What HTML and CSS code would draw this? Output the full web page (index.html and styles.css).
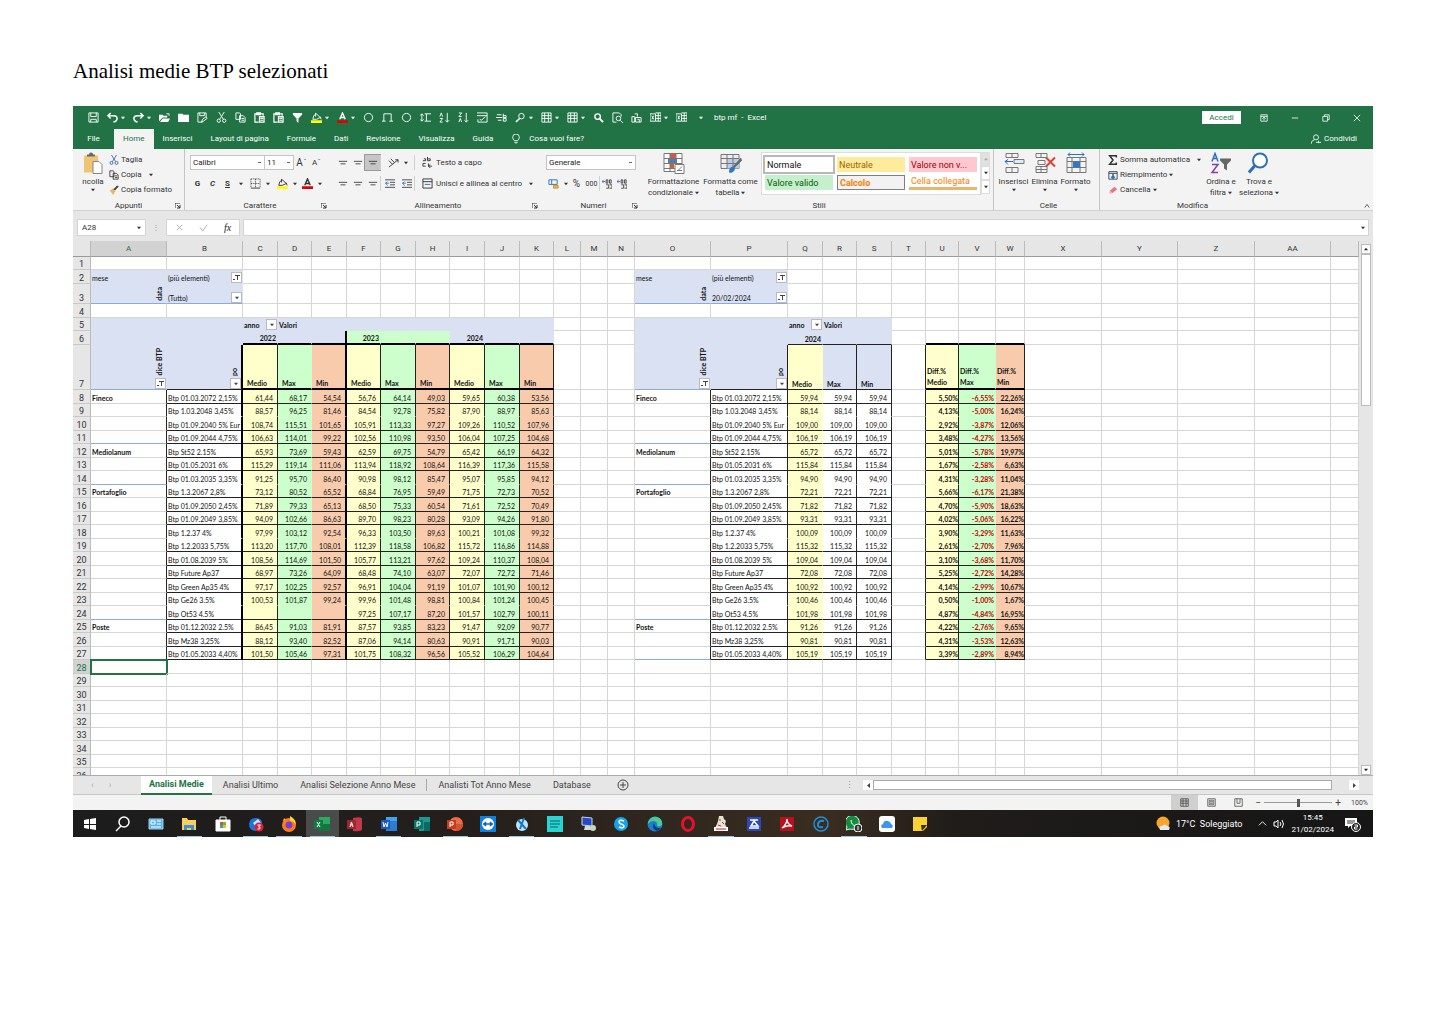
FILE: index.html
```html
<!DOCTYPE html>
<html lang="it">
<head>
<meta charset="utf-8">
<title>Analisi medie BTP selezionati</title>
<link rel="stylesheet" href="styles.css">
</head>
<body>
<svg class="defs" aria-hidden="true">
  <symbol id="save" viewBox="0 0 12 12"><path d="M1 1h10v10H1zM3 1v4h6V1M3 11V8h6v3"/></symbol>
  <symbol id="undo" viewBox="0 0 12 12"><path d="M4 1L1 4l3 3M1 4h6q4 0 4 3t-4 4" stroke-width="1.6"/></symbol>
  <symbol id="redo" viewBox="0 0 12 12"><path d="M8 1l3 3-3 3M11 4H5Q1 4 1 7t4 4" stroke-width="1.6"/></symbol>
  <symbol id="open" viewBox="0 0 12 12"><path class="f" d="M0 10V3h4l1 1h4v2H4zM1 11l3-4h8l-2 4z"/><path d="M8 2h3v2"/></symbol>
  <symbol id="folder" viewBox="0 0 12 12"><path class="f" d="M0 2h5l1 1h6v8H0z"/></symbol>
  <symbol id="savepen" viewBox="0 0 12 12"><path d="M6 11H1V1h9v4M3 1v3h5V1M5 11l1-3 4-3 1 2-4 3z"/></symbol>
  <symbol id="cut" viewBox="0 0 12 12"><path d="M3 0l5 8M9 0L4 8"/><circle cx="3" cy="9.500" r="1.800"/><circle cx="9" cy="9.500" r="1.800"/></symbol>
  <symbol id="copy" viewBox="0 0 12 12"><path d="M1 1h4l1 1v6H1zM5 4h4l2 2v5H5zM7 7h3M7 9h3"/></symbol>
  <symbol id="paste" viewBox="0 0 12 12"><path d="M5 11H1V2h9v2M3 1h4v2H3zM6 5h5v6H6zM7 7h3M7 9h3" stroke-width="1.300"/></symbol>
  <symbol id="funnel" viewBox="0 0 12 12"><path class="f" d="M1 1h10v2L7 7v5L5 10V7L1 3z"/></symbol>
  <symbol id="fill" viewBox="0 0 12 12"><path d="M5 1v4M3 4l3-2 4 4-4 2H2zM10 5l1 3"/><path d="M0 9h12v3H0z" style="fill:#ff0;stroke:none"/></symbol>
  <symbol id="fcol" viewBox="0 0 12 12"><path d="M3 8l3-7 3 7M4 6h4" stroke-width="1.500"/><path d="M0 9h12v3H0z" style="fill:#e00000;stroke:none"/></symbol>
  <symbol id="circle" viewBox="0 0 12 12"><circle cx="6" cy="6" r="4.500"/></symbol>
  <symbol id="rect" viewBox="0 0 12 12"><path d="M2 10V2h8v8M0 10h4M8 10h4"/></symbol>
  <symbol id="span" viewBox="0 0 12 12"><path d="M2 2v8M0 4l2-2 2 2M0 8l2 2 2-2M5 2h7M5 10h7M7 2v8"/></symbol>
  <symbol id="az" viewBox="0 0 12 12"><path d="M1 5l1.500-4L4 5M1 7h3l-3 4h3M9 1v10M7 9l2 2 2-2"/></symbol>
  <symbol id="za" viewBox="0 0 12 12"><path d="M1 1h3L1 5h3M1 11l1.500-4L4 11M9 1v10M7 9l2 2 2-2"/></symbol>
  <symbol id="chart" viewBox="0 0 12 12"><path d="M0 1h11v10H1V8M0 4h11M3 8l2 1 4-4"/></symbol>
  <symbol id="replace" viewBox="0 0 12 12"><path d="M1 3h5M0 6h7M2 9h4M8 2v4h3V4H8M8 7h3v3H8z"/></symbol>
  <symbol id="lens" viewBox="0 0 12 12"><circle cx="5" cy="5" r="3" stroke-width="1.500"/><path d="M7 7l4 4" stroke-width="2"/></symbol>
  <symbol id="lensl" viewBox="0 0 12 12"><circle cx="7" cy="4.500" r="3"/><path d="M5 7l-4 4" stroke-width="1.600"/></symbol>
  <symbol id="grid" viewBox="0 0 12 12"><path d="M1 1h10v10H1zM1 4h10M1 7h10M4 1v10M8 1v10"/></symbol>
  <symbol id="preview" viewBox="0 0 12 12"><path d="M10 5V3L8 1H1v10h4"/><circle cx="7" cy="7" r="2.500"/><path d="M9 9l3 3"/></symbol>
  <symbol id="bars" viewBox="0 0 12 12"><path d="M1 5h3v6H1zM4 2h3v3M5 6h6v5H5zM7 8h2v3"/></symbol>
  <symbol id="xl" viewBox="0 0 12 12"><path d="M0 2h6v8H0zM6 1h6v9H6M6 4h6M6 7h6M9 1v9M2 4l2 4M4 4L2 8"/></symbol>
  <symbol id="caret" viewBox="0 0 5 5"><path class="f" d="M0 1h5L2.500 4z"/></symbol>
  <symbol id="bulb" viewBox="0 0 12 12"><path d="M4 8Q2 6 2 4a4 4 0 0 1 8 0q0 2-2 4zM4 10h4M5 12h2"/></symbol>
  <symbol id="person" viewBox="0 0 12 12"><circle cx="6" cy="4" r="3"/><path d="M0 12q0-4 4-5M6 10h6M9 8v3"/></symbol>
  <symbol id="launch" viewBox="0 0 6 6"><path d="M0 5V0h5M2 2l3 3M5 2v3H2"/></symbol>
  <symbol id="lines" viewBox="0 0 12 12"><path d="M1 4h10M3 7h6"/></symbol>
  <symbol id="orient" viewBox="0 0 12 12"><path d="M1 11L11 3M8 3h3v3M1 4l4 4M3 2l4 4"/></symbol>
  <symbol id="indent" viewBox="0 0 12 12"><path d="M0 1h12M6 4h6M6 7h6M0 10h12"/><path d="M0 5h5M3 3L1 5l2 3" style="stroke:#2b70c0"/></symbol>
  <symbol id="wrap" viewBox="0 0 12 12"><path d="M1 4h3v-2H2M6 0v4h3V2H6M4 7H1v3h3M7 7v3h4M9 8l-2 2 2 2"/></symbol>
  <symbol id="merge" viewBox="0 0 12 12"><path d="M1 1h10v10H1zM1 4h10"/><path d="M3 7h6" style="stroke:#2b70c0"/></symbol>
  <symbol id="dots" viewBox="0 0 12 12"><path d="M1 1h10M1 6h10M6 1v10M1 1v10M11 1v10" stroke-dasharray="1 1"/><path d="M1 11h10"/></symbol>
  <symbol id="coins" viewBox="0 0 12 12"><path d="M1 2h9v5H1zM4 2v5" style="stroke:#2b70c0"/><path d="M6 8h5v3H6z" style="fill:#f0c040;stroke:#c09020"/></symbol>
  <symbol id="dec" viewBox="0 0 12 12"><path d="M5 1v4h2V1zM9 1v4h2V1zM5 7h3v4H5M9 7h3v4H9"/><path d="M0 3h4M2 1L0 3l2 2" style="stroke:#2b70c0"/></symbol>
</svg>

<main class="page">
<h1 class="title">Analisi medie BTP selezionati</h1>
<section class="excel">
  <header class="qat">
    <div class="qat-icons">
      <button aria-label="Salva"><svg><use href="#save"/></svg></button>
      <button class="w" aria-label="Annulla"><svg><use href="#undo"/></svg><svg class="c"><use href="#caret"/></svg></button>
      <button class="w" aria-label="Ripeti"><svg><use href="#redo"/></svg><svg class="c"><use href="#caret"/></svg></button>
      <button aria-label="Apri"><svg><use href="#open"/></svg></button>
      <button aria-label="Cartella"><svg><use href="#folder"/></svg></button>
      <button aria-label="Salva con nome"><svg><use href="#savepen"/></svg></button>
      <button aria-label="Taglia"><svg><use href="#cut"/></svg></button>
      <button aria-label="Copia"><svg><use href="#copy"/></svg></button>
      <button aria-label="Incolla"><svg><use href="#paste"/></svg></button>
      <button aria-label="Incolla valori"><svg><use href="#paste"/></svg></button>
      <button aria-label="Filtro"><svg><use href="#funnel"/></svg></button>
      <button class="w" aria-label="Riempimento"><svg><use href="#fill"/></svg><svg class="c"><use href="#caret"/></svg></button>
      <button class="w" aria-label="Colore carattere"><svg><use href="#fcol"/></svg><svg class="c"><use href="#caret"/></svg></button>
      <button aria-label="Ovale"><svg><use href="#circle"/></svg></button>
      <button aria-label="Rettangolo"><svg><use href="#rect"/></svg></button>
      <button aria-label="Ellisse"><svg><use href="#circle"/></svg></button>
      <button aria-label="Altezza"><svg><use href="#span"/></svg></button>
      <button aria-label="Ordina crescente"><svg><use href="#az"/></svg></button>
      <button aria-label="Ordina decrescente"><svg><use href="#za"/></svg></button>
      <button aria-label="Grafico"><svg><use href="#chart"/></svg></button>
      <button aria-label="Sostituisci"><svg><use href="#replace"/></svg></button>
      <button class="w" aria-label="Forme"><svg><use href="#lensl"/></svg><svg class="c"><use href="#caret"/></svg></button>
      <button class="w" aria-label="Tabella"><svg><use href="#grid"/></svg><svg class="c"><use href="#caret"/></svg></button>
      <button class="w" aria-label="Pivot"><svg><use href="#grid"/></svg><svg class="c"><use href="#caret"/></svg></button>
      <button aria-label="Trova"><svg><use href="#lens"/></svg></button>
      <button aria-label="Anteprima"><svg><use href="#preview"/></svg></button>
      <button aria-label="Istogramma"><svg><use href="#bars"/></svg></button>
      <button class="w" aria-label="Cartella di lavoro"><svg><use href="#xl"/></svg><svg class="c"><use href="#caret"/></svg></button>
      <button aria-label="Foglio"><svg><use href="#xl"/></svg></button>
      <button aria-label="Personalizza"><svg class="c"><use href="#caret"/></svg></button>
    </div>
    <span class="doc">btp mf&nbsp; -&nbsp; Excel</span>
    <button class="login">Accedi</button>
    <div class="winbtns">
      <button aria-label="Opzioni barra"><svg viewBox="0 0 10 10"><path d="M1 1h8v8H1zM1 3h8M5 8V4M3 6l2-2 2 2"/></svg></button>
      <button aria-label="Riduci"><svg viewBox="0 0 10 10"><path d="M1 5h8"/></svg></button>
      <button aria-label="Ripristina"><svg viewBox="0 0 10 10"><path d="M1 3h6v6H1zM3 3V1h6v6H7"/></svg></button>
      <button aria-label="Chiudi"><svg viewBox="0 0 10 10"><path d="M1 1l8 8M9 1L1 9"/></svg></button>
    </div>
  </header>
  <nav class="tabs">
    <a href="#" class="file">File</a><a href="#" class="on">Home</a><a href="#">Inserisci</a><a href="#">Layout di pagina</a><a href="#">Formule</a><a href="#">Dati</a><a href="#">Revisione</a><a href="#">Visualizza</a><a href="#">Guida</a>
    <a href="#" class="tell"><svg><use href="#bulb"/></svg>Cosa vuoi fare?</a>
    <a href="#" class="share"><svg><use href="#person"/></svg>Condividi</a>
  </nav>

  <div class="ribbon">
    <section class="grp g-clip sep">
      <div class="body">
        <button class="big"><svg class="bi" viewBox="0 0 22 22"><path d="M2 3h14v17H2z" style="fill:#f0c571;stroke:none"/><path d="M5 4h8V2h-2q0-2-2-2T7 2H5z" style="fill:#666;stroke:none"/><path d="M11 9h6l3 3v9h-9z" style="fill:#fff;stroke:#888"/></svg><span>ncolla</span><svg class="c"><use href="#caret"/></svg></button>
        <div class="stack">
          <button><svg class="blue"><use href="#cut"/></svg>Taglia</button>
          <button><svg><use href="#copy"/></svg>Copia<svg class="c m"><use href="#caret"/></svg></button>
          <button><svg viewBox="0 0 12 12"><path d="M1 7l4-3 3 3-3 5z" style="fill:#eab765;stroke:none"/><path d="M6 5l4-4 1 1-4 4z" style="fill:#555"/></svg>Copia formato</button>
        </div>
      </div>
      <footer>Appunti<svg class="l"><use href="#launch"/></svg></footer>
    </section>
    <section class="grp g-font">
      <div class="body rows">
        <div class="r"><select class="sel fam" aria-label="Carattere"><option>Calibri</option></select><select class="sel siz" aria-label="Dimensione"><option>11</option></select><button class="k big-a">A<sup>ˆ</sup></button><button class="k">A<sup>ˇ</sup></button></div>
        <div class="r"><button class="k bold">G</button><button class="k ital">C</button><button class="k bold und">S</button><button class="cb" aria-label="Tipo"><svg class="c"><use href="#caret"/></svg></button><button class="k2" aria-label="Bordi"><svg><use href="#dots"/></svg><svg class="c"><use href="#caret"/></svg></button><button class="k2" aria-label="Sfondo"><svg><use href="#fill"/></svg><svg class="c"><use href="#caret"/></svg></button><button class="k2 nar" aria-label="Colore"><svg><use href="#fcol"/></svg><svg class="c"><use href="#caret"/></svg></button></div>
      </div>
      <footer>Carattere<svg class="l"><use href="#launch"/></svg></footer>
    </section>
    <section class="grp g-align">
      <div class="body rows">
        <div class="r"><button class="k" aria-label="In alto"><svg><use href="#lines"/></svg></button><button class="k" aria-label="Al centro"><svg><use href="#lines"/></svg></button><button class="k down" aria-label="In basso"><svg><use href="#lines"/></svg></button><button class="k2 bl" aria-label="Orientamento"><svg><use href="#orient"/></svg><svg class="c"><use href="#caret"/></svg></button><button class="txt bl"><svg><use href="#wrap"/></svg>Testo a capo</button></div>
        <div class="r"><button class="k" aria-label="Sinistra"><svg><use href="#lines"/></svg></button><button class="k" aria-label="Centro"><svg><use href="#lines"/></svg></button><button class="k" aria-label="Destra"><svg><use href="#lines"/></svg></button><button class="k bl ind" aria-label="Riduci rientro"><svg><use href="#indent"/></svg></button><button class="k ind" aria-label="Aumenta rientro"><svg><use href="#indent"/></svg></button><button class="txt bl"><svg><use href="#merge"/></svg>Unisci e allinea al centro<svg class="c m"><use href="#caret"/></svg></button></div>
      </div>
      <footer>Allineamento<svg class="l"><use href="#launch"/></svg></footer>
    </section>
    <section class="grp g-num">
      <div class="body rows">
        <div class="r"><select class="sel fmt" aria-label="Formato numero"><option>Generale</option></select></div>
        <div class="r"><button class="k2 nar" aria-label="Valuta"><svg><use href="#coins"/></svg><svg class="c"><use href="#caret"/></svg></button><button class="k pct">%</button><button class="k tho">000</button><button class="k bl" aria-label="Aumenta decimali"><svg><use href="#dec"/></svg></button><button class="k" aria-label="Diminuisci decimali"><svg><use href="#dec"/></svg></button></div>
      </div>
      <footer>Numeri<svg class="l"><use href="#launch"/></svg></footer>
    </section>
    <section class="grp g-style sep">
      <div class="body">
        <button class="big wide"><svg class="bi" viewBox="0 0 22 22"><path d="M1 1h18v18H1z" style="fill:#fff"/><path d="M7 1h6v5H7zM7 11h4v5H7z" style="fill:#d9593d;stroke:none"/><path d="M5 6h9v5H5z" style="fill:#4a7ebb;stroke:none"/><path d="M1 6h18M1 11h18M1 16h18M7 1v18M13 1v18"/><path d="M12 12h9v9h-9z" style="fill:#fff"/><path d="M15 18l4-4M14 18h5"/></svg><span>Formattazione<br>condizionale<svg class="c"><use href="#caret"/></svg></span></button>
        <button class="big wide"><svg class="bi" viewBox="0 0 22 22"><path d="M1 2h18v14H1z" style="fill:#eee"/><path d="M7 6h12v10H7z" style="fill:#b9cfe8;stroke:none"/><path d="M1 6h18M1 11h18M7 2v14M13 2v14"/><path d="M21 5l-8 9 1 2 8-8z" style="fill:#666;stroke:none"/><path d="M13 14q-4 0-4 6 5 1 6-4z" style="fill:#2f76c4;stroke:none"/></svg><span>Formatta come<br>tabella<svg class="c"><use href="#caret"/></svg></span></button>
        <div class="gallery">
          <button class="s-n">Normale</button><button class="s-y">Neutrale</button><button class="s-r">Valore non v...</button>
          <button class="s-g">Valore valido</button><button class="s-c">Calcolo</button><button class="s-l">Cella collegata</button>
        </div>
        <div class="gscroll"><button aria-label="Su" class="off"><svg class="c up"><use href="#caret"/></svg></button><button aria-label="Giù"><svg class="c"><use href="#caret"/></svg></button><button aria-label="Altro"><svg class="c"><use href="#caret"/></svg></button></div>
      </div>
      <footer>Stili</footer>
    </section>
    <section class="grp g-cell sep">
      <div class="body">
        <button class="big mid"><svg class="bi" viewBox="0 0 22 22"><path d="M3 1h12v4H3zM9 1v4M3 15h12v5H3zM9 15v5"/><path d="M11 7h10v4H11z" style="fill:#dce9f7"/><path d="M2 9h8M5 7L2 9l3 3" style="stroke:#2b70c0"/></svg><span>Inserisci</span><svg class="c"><use href="#caret"/></svg></button>
        <button class="big mid"><svg class="bi" viewBox="0 0 22 22"><path d="M2 1h11v4H2zM7 1v4M4 8h7v4H4zM2 14h11v6H2zM7 14v6M2 17h11"/><path d="M12 5l9 9M21 5l-9 9" style="stroke:#d9432f;stroke-width:2"/></svg><span>Elimina</span><svg class="c"><use href="#caret"/></svg></button>
        <button class="big mid"><svg class="bi" viewBox="0 0 22 22"><path d="M2 5h19v15H2zM2 9h19M2 15h19M7 5v15M15 5v15"/><path d="M8 9h7v6H8z" style="fill:#2f76c4;stroke:none"/><path d="M3 2h16M5 0L3 2l2 2M17 0l2 2-2 2" style="stroke:#2b70c0"/></svg><span>Formato</span><svg class="c"><use href="#caret"/></svg></button>
      </div>
      <footer>Celle</footer>
    </section>
    <section class="grp g-edit">
      <div class="body">
        <div class="stack">
          <button><svg viewBox="0 0 12 12"><path d="M10 3V1H2l4 5-4 5h8V9" stroke-width="1.800"/></svg>Somma automatica<svg class="c m"><use href="#caret"/></svg></button>
          <button><svg viewBox="0 0 12 12"><path d="M1 2h10v9H1zM1 4h10"/><path d="M6 4v6M4 8l2 2 2-2" style="stroke:#2b70c0;stroke-width:2"/></svg>Riempimento<svg class="c"><use href="#caret"/></svg></button>
          <button><svg viewBox="0 0 12 12"><path d="M2 7l6-5 3 3-6 5z" style="fill:#e8748c;stroke:none"/><path d="M2 7l3 3-2 1-2-2z" style="fill:#f7bcc8;stroke:none"/></svg>Cancella<svg class="c"><use href="#caret"/></svg></button>
        </div>
        <button class="big sort"><svg class="bi" viewBox="0 0 22 22"><path d="M2 9l3-8 3 8M3 6h4" style="stroke:#2b70c0;stroke-width:1.500"/><path d="M2 12h6l-6 8h6" style="stroke:#8a3fa0;stroke-width:1.500"/><path d="M10 6h11v2l-4 4v6l-3-2v-4l-4-4z" style="fill:#666;stroke:none"/></svg><span>Ordina e<br>filtra<svg class="c"><use href="#caret"/></svg></span></button>
        <button class="big sort"><svg class="bi" viewBox="0 0 22 22"><circle cx="12" cy="8" r="7" style="stroke:#2f6fb8;stroke-width:2;fill:#fff"/><path d="M7 13l-6 7" style="stroke:#2f6fb8;stroke-width:3"/></svg><span>Trova e<br>seleziona<svg class="c"><use href="#caret"/></svg></span></button>
      </div>
      <footer>Modifica<svg class="l" viewBox="0 0 8 8"><path d="M1 6l3-4 3 4"/></svg></footer>
    </section>
  </div>

  <div class="fbar">
    <div class="namebox"><input aria-label="Casella nome" value="A28"><svg class="c"><use href="#caret"/></svg></div>
    <span class="grip">⋮</span>
    <div class="fx"><button aria-label="Annulla"><svg viewBox="0 0 10 10"><path d="M2 2l6 6M8 2L2 8"/></svg></button><button aria-label="Invio"><svg viewBox="0 0 10 10"><path d="M1 5l3 4 5-7"/></svg></button><button class="fn">fx</button></div>
    <div class="formula"><input aria-label="Barra della formula"><svg class="c"><use href="#caret"/></svg></div>
  </div>

  <div class="sheet">
    <div class="gridwrap"><table class="cells" id="cells"></table></div>
    <div class="vscroll"><button aria-label="Scorri su"><svg class="c up"><use href="#caret"/></svg></button><span class="thumb"></span><button aria-label="Scorri giù"><svg class="c"><use href="#caret"/></svg></button></div>
  </div>

  <nav class="sheets">
    <span class="arrows"><span>‹</span><span>›</span></span>
    <a href="#" class="on">Analisi Medie</a><a href="#">Analisi Ultimo</a><a href="#" class="rule">Analisi Selezione Anno Mese</a><a href="#">Analisti Tot Anno Mese</a><a href="#">Database</a>
    <button class="plus" aria-label="Nuovo foglio"><svg viewBox="0 0 12 12"><circle cx="6" cy="6" r="5"/><path d="M3 6h6M6 3v6"/></svg></button>
    <span class="grip">⋮</span>
    <div class="hscroll"><button aria-label="Scorri a sinistra"><svg viewBox="0 0 5 5"><path class="f" d="M4 0v5L1 2.500z"/></svg></button><span class="bar"></span><button aria-label="Scorri a destra"><svg viewBox="0 0 5 5"><path class="f" d="M1 0v5l3-2.500z"/></svg></button></div>
  </nav>
  <div class="status">
    <button class="on" aria-label="Normale"><svg><use href="#grid"/></svg></button>
    <button aria-label="Layout di pagina"><svg viewBox="0 0 12 12"><path d="M1 1h10v10H1zM3 3h6v6H3zM4 5h4M4 7h4"/></svg></button>
    <button aria-label="Interruzioni"><svg viewBox="0 0 12 12"><path d="M1 1h10v10H1zM4 1v6h4V1"/></svg></button>
    <span class="pm">−</span><input type="range" aria-label="Zoom" value="50"><span class="pm">+</span><span class="pc">100%</span>
  </div>

  <footer class="taskbar">
    <div class="apps">
      <button aria-label="Start"><svg viewBox="0 0 16 16"><path class="f" d="M2 4l5-1v5H2zM8 3l6-1v6H8zM2 9h5v4l-5-1zM8 9h6v5l-6-1z"/></svg></button>
      <button aria-label="Cerca"><svg viewBox="0 0 16 16"><circle cx="9" cy="6" r="5" stroke-width="1.500"/><path d="M6 10l-5 5" stroke-width="1.500"/></svg></button>
      <button aria-label="Pannello"><svg viewBox="0 0 16 16"><path d="M1 3h14v10H1z" style="fill:#5ab4e8;stroke:#9ad4f4"/><path d="M3 5h4v3H3zM9 5h4M9 8h4M3 11h10"/></svg></button>
      <button class="run" aria-label="Esplora file"><svg viewBox="0 0 16 16"><path d="M1 2h5l1 2h8v10H1z" style="fill:#f6cf5f;stroke:none"/><path d="M3 9h10v5h-3v-2H6v2H3z" style="fill:#3a8fd6;stroke:none"/></svg></button>
      <button aria-label="Store"><svg viewBox="0 0 16 16"><path d="M1 4h14v11H1z" style="fill:#fff"/><path d="M5 4V1h6v3"/><path d="M5 6h3v3H5z" style="fill:#e04f2a;stroke:none"/><path d="M8 6h3v3H8z" style="fill:#7cb82f;stroke:none"/><path d="M5 9h3v3H5z" style="fill:#2a9fe0;stroke:none"/><path d="M8 9h3v3H8z" style="fill:#f5b921;stroke:none"/></svg></button>
      <button class="run" aria-label="Thunderbird"><svg viewBox="0 0 16 16"><path d="M1 8Q2 1 9 2q6 1 5 7t-7 6Q1 14 1 8z" style="fill:#1d74d8;stroke:none"/><path d="M5 7l5-4 3 4-5 4z" style="fill:#cfe4fa;stroke:none"/><circle cx="11" cy="11" r="4.500" style="fill:#d9203a;stroke:none"/><path d="M9.500 9h3l-2 2q3 0 1 2h-2"/></svg></button>
      <button class="run" aria-label="Firefox"><svg viewBox="0 0 16 16"><circle cx="8" cy="9" r="7" style="fill:#ff7a1c;stroke:none"/><path d="M9 0q6 3 6 9-2-4-6-4z" style="fill:#ffd53a;stroke:none"/><path d="M2 5l1-3 2 2z" style="fill:#ffb02a;stroke:none"/><circle cx="8" cy="9" r="3.500" style="fill:#7a3fd0;stroke:none"/></svg></button>
      <button class="run cur" aria-label="Excel"><svg viewBox="0 0 16 16"><path d="M5 1h11v14H5z" style="fill:#2fa866;stroke:none"/><path d="M10 8h6v7H5v-3z" style="fill:#18733f;stroke:none"/><path d="M0 4h9v9H0z" style="fill:#107c41;stroke:none"/><path d="M3 6l3 5M6 6l-3 5"/></svg></button>
      <button aria-label="Access"><svg viewBox="0 0 16 16"><path d="M6 2q9-2 9 1v10q0 3-9 2z" style="fill:#c2374a;stroke:none"/><path d="M0 4h9v9H0z" style="fill:#a4262c;stroke:none"/><path d="M3 11l1.500-5L6 11M3 9h3"/></svg></button>
      <button class="run" aria-label="Word"><svg viewBox="0 0 16 16"><path d="M5 1h11v14H5z" style="fill:#2b7cd3;stroke:none"/><path d="M5 1h11v4H5z" style="fill:#41a5ee;stroke:none"/><path d="M0 4h9v9H0z" style="fill:#185abd;stroke:none"/><path d="M2 6l1 5 1.500-4L6 11l1-5"/></svg></button>
      <button aria-label="Publisher"><svg viewBox="0 0 16 16"><path d="M5 1h11v14H5z" style="fill:#1a9a94;stroke:none"/><path d="M10 6h6v9h-6z" style="fill:#0b6a64;stroke:none"/><path d="M0 4h9v9H0z" style="fill:#077568;stroke:none"/><path d="M3 11V6h3v3H3"/></svg></button>
      <button class="run" aria-label="PowerPoint"><svg viewBox="0 0 16 16"><circle cx="9" cy="8" r="7" style="fill:#ed6c47;stroke:none"/><path d="M9 8h7q0 7-7 7z" style="fill:#d35230;stroke:none"/><path d="M0 4h9v9H0z" style="fill:#c43e1c;stroke:none"/><path d="M3 11V6h3v3H3"/></svg></button>
      <button aria-label="TeamViewer"><svg viewBox="0 0 16 16"><path d="M0 0h16v16H0z" style="fill:#1180e0;stroke:none"/><circle cx="8" cy="8" r="6" style="fill:#fff;stroke:none"/><path d="M3 8h10M6 6L4 8l2 2M10 6l2 2-2 2" style="stroke:#1160c0;stroke-width:1.500"/></svg></button>
      <button class="run" aria-label="App"><svg viewBox="0 0 16 16"><circle cx="8" cy="9" r="6" style="fill:#bfe6fa;stroke:none"/><path d="M4 4l8 9M10 2L6 13" style="stroke:#1878c8;stroke-width:2"/></svg></button>
      <button aria-label="Nota"><svg viewBox="0 0 16 16"><path d="M0 0h16v16H0z" style="fill:#2ad4d0;stroke:none"/><path d="M3 5h10M3 8h10M3 11h8" style="stroke:#116070"/></svg></button>
      <button aria-label="Desktop remoto"><svg viewBox="0 0 16 16"><path d="M2 1l10 1v8L2 9z" style="fill:#2448c8;stroke:#cdd6e8"/><path d="M5 10h5l2 4H4z" style="fill:#d4d8dc;stroke:none"/><circle cx="13" cy="12" r="3" style="fill:#c8d8b8;stroke:none"/></svg></button>
      <button aria-label="Skype"><svg viewBox="0 0 16 16"><circle cx="8" cy="8" r="7" style="fill:#12a5e8;stroke:none"/><path d="M11 5q-5-2-5 1 0 1 2 2 3 1 3 2 0 3-5 1" stroke-width="1.500"/></svg></button>
      <button aria-label="Edge"><svg viewBox="0 0 16 16"><circle cx="8" cy="8" r="7.500" style="fill:#1b7fd0;stroke:none"/><path d="M1 6q3-6 9-5 6 2 5 8-2 2-5 1 1-5-4-5-3 0-5 3z" style="fill:#4cc994;stroke:none"/><path d="M7 7q-3 5 3 8 3-1 4-3-6 1-7-5z" style="fill:#123a78;stroke:none"/></svg></button>
      <button aria-label="Opera"><svg viewBox="0 0 16 16"><ellipse cx="8" cy="8" rx="5.500" ry="6.500" style="stroke:#e8112d;stroke-width:3"/></svg></button>
      <button class="run" aria-label="Gioco"><svg viewBox="0 0 16 16"><path d="M6 0h4l1 3 2 2-1 3 2 4H2l2-4 1-3z" style="fill:#e8e0d0;stroke:none"/><path d="M6 4h2M9 6l2 2M5 9l3 1" style="stroke:#6a5a48"/><path d="M1 11h14v4H1z" style="fill:#fff;stroke:none"/><path d="M3 13h10" style="stroke:#b02020"/></svg></button>
      <button aria-label="Scanner"><svg viewBox="0 0 16 16"><path d="M1 1h14v14H1z" style="fill:#2b48b8;stroke:none"/><path d="M4 4h8M5 10l3-5 4 5zM3 12h10" stroke-width="1.500"/></svg></button>
      <button aria-label="Acrobat"><svg viewBox="0 0 16 16"><path d="M1 1h14v14H1z" style="fill:#b8101c;stroke:none"/><path d="M3 12q5-4 5-9 0 5 5 7-5-1-10 2z" stroke-width="1.300"/></svg></button>
      <button aria-label="CCleaner"><svg viewBox="0 0 16 16"><circle cx="8" cy="8" r="7" style="stroke:#1e90d8;stroke-width:1.500"/><path d="M11 5q-5-1-6 3t5 3" style="stroke:#1e90d8;stroke-width:2"/></svg></button>
      <button class="run" aria-label="WhatsApp"><svg viewBox="0 0 16 16"><path d="M0 14l1-3a7 7 0 1 1 3 2z" style="fill:#128c3e;stroke:#e8f8ee"/><path d="M5 4q0 5 5 6"/><circle cx="12" cy="12" r="4" style="fill:#333"/><path d="M12 10v4"/></svg></button>
      <button aria-label="iCloud"><svg viewBox="0 0 16 16"><rect x="0" y="0" width="16" height="16" rx="3" style="fill:#fff;stroke:none"/><path d="M3 12q-2-3 1-4 1-4 5-3 3 1 3 3 3 1 1 4z" style="fill:#3a96f0;stroke:none"/></svg></button>
      <button aria-label="Note"><svg viewBox="0 0 16 16"><path d="M1 1h14v10l-4 4H1z" style="fill:#fbd22f;stroke:none"/><path d="M9 9h6l-5 6z" style="fill:#333;stroke:none"/></svg></button>
    </div>
    <div class="tray">
      <svg viewBox="0 0 16 16"><circle cx="8" cy="7" r="6.500" style="fill:#f7a52c;stroke:none"/><path d="M5 14q-2-4 2-4 3-3 5 0 4 0 2 4z" style="fill:#e4e8f0;stroke:none"/></svg>
      <span class="weather">17°C&nbsp; Soleggiato</span>
      <svg class="s" viewBox="0 0 10 10"><path d="M1 7l4-4 4 4"/></svg>
      <svg class="s v" viewBox="0 0 12 10"><path d="M1 3h2l2-2v8L3 7H1zM7 3q2 2 0 4M9 1q3 4 0 8"/></svg>
      <span class="clock">15:45<br>21/02/2024</span>
      <svg viewBox="0 0 16 16"><path class="f" d="M0 2h12v8H5l-2 2v-2H0z"/><path d="M2 5h8M2 7h8" style="stroke:#333"/><circle cx="11" cy="11" r="4.500" style="fill:#222"/><path d="M9.500 9h3v2h-3v2h3"/></svg>
    </div>
  </footer>
</section>
</main>
<script src="sheet.js"></script>
</body>
</html>
```

FILE: styles.css
```css
* { box-sizing: border-box; }
body { margin: 0; background: #fff; color: #222; font-family: Roboto, "Liberation Sans", sans-serif; font-size: 8px; line-height: 10px; }
a { color: inherit; text-decoration: none; }
button { border: 0; padding: 0; margin: 0; background: none; color: inherit; font: inherit; display: flex; align-items: center; justify-content: center; white-space: nowrap; flex: none; }
input { font: inherit; color: inherit; border: 0; padding: 0; background: none; min-width: 0; }
svg { width: 12px; height: 12px; fill: none; stroke: currentColor; stroke-width: 1; flex: none; display: block; }
.f { fill: currentColor; stroke: none; }
.defs { position: absolute; width: 0; height: 0; }
svg.c { width: 4px; height: 4px; }
.up { transform: rotate(180deg); }
.page { padding: 58px 72px 58px 73px; }
.title { margin: 0 0 22px; font: 21px/26px "Liberation Serif", serif; color: #000; }
.excel { background: #e6e6e6; }

.qat { display: flex; align-items: center; height: 23px; background: #217346; color: #fff; padding: 0 1px 0 11px; }
.qat-icons { display: flex; }
.qat-icons button { width: 19px; height: 20px; }
.qat-icons .w { width: 26px; gap: 3px; }
.qat-icons svg:not(.c) { width: 11px; height: 11px; }
.doc { margin-left: 4px; flex: 1; }
.login { background: #fff; color: #217346; width: 39px; height: 13px; }
.winbtns { display: flex; margin-left: 7px; }
.winbtns button { width: 31px; }
.winbtns svg { width: 8px; height: 8px; }

.tabs { display: flex; height: 20px; line-height: 20px; background: #217346; color: #fff; }
.tabs a { padding: 0 9px; }
.tabs .file { width: 41px; padding: 0; text-align: center; }
.tabs .on { background: #f3f3f3; color: #217346; }
.tabs svg { width: 10px; height: 10px; }
.tabs .tell, .tabs .share { display: flex; align-items: center; gap: 8px; }
.tabs .share { margin-left: auto; gap: 3px; padding-right: 16px; }

.ribbon { display: flex; height: 62px; background: #f3f3f3; border-bottom: 1px solid #d0d0d0; color: #333; }
.grp { display: flex; flex-direction: column; padding-top: 3px; flex: none; }
.sep { border-right: 1px solid #c4c4c4; }
.grp .body { display: flex; flex: 1; align-items: flex-start; }
.grp footer { position: relative; height: 10px; line-height: 12px; text-align: center; }
.grp .l { position: absolute; right: 3px; top: 3px; width: 6px; height: 6px; }
.rows { flex-direction: column; }
.r { display: flex; align-items: center; height: 21px; }
.g-clip { width: 112px; }
.g-font { width: 145px; padding-left: 5px; }
.g-align { width: 211px; padding-left: 5px; }
.g-num { width: 100px; padding-left: 5px; }
.g-style { width: 353px; padding-left: 4px; }
.g-cell { width: 106px; padding-left: 4px; }
.g-edit { flex: 1; padding-left: 8px; }
.g-edit footer { padding-right: 96px; }
.big { flex-direction: column; width: 40px; gap: 1px; line-height: 11px; justify-content: flex-start; }
.big .bi { width: 22px; height: 23px; stroke: #777; }
.big span svg.c { display: inline-block; margin-left: 2px; vertical-align: middle; }
.wide { width: 57px; }
.mid { width: 31px; }
.sort { width: 38px; }
.stack { display: flex; flex-direction: column; }
.stack button { height: 15px; gap: 2px; justify-content: flex-start; }
.stack svg:not(.c) { width: 10px; height: 10px; }
.stack .m { margin-left: 5px; }
.g-clip .stack { margin-left: -4px; }
.g-edit .stack { width: 94px; }
.blue { color: #2b5f9c; }
.sel { appearance: none; border: 1px solid #c4c4c4; border-radius: 0; height: 15px; padding: 0 2px; font: inherit; color: #222; background: #fff linear-gradient(#666, #666) no-repeat right 3px center / 3px 1px; }
.fam { width: 75px; }
.siz { width: 29px; border-left: 0; }
.fmt { width: 90px; }
.k { width: 15px; height: 15px; }
.k svg { width: 10px; height: 10px; }
.k sup { font-size: 8px; line-height: 8px; color: #2b70c0; }
.big-a { font-size: 10px; }
.bold { font-weight: 700; }
.ital { font-style: italic; font-weight: 700; }
.und { text-decoration: underline; }
.cb { width: 11px; }
.k2 { width: 27px; gap: 5px; height: 15px; }
.k2 svg:not(.c) { width: 11px; height: 11px; }
.nar { width: 23px; }
.down { background: #c6c6c6; outline: 1px solid #999; }
.bl { border-left: 1px solid #d0d0d0; }
.k2.bl { width: 34px; }
.txt { gap: 3px; padding-left: 7px; height: 15px; }
.txt svg:not(.c) { width: 11px; height: 11px; }
.txt .m { margin-left: 4px; }
.ind.bl { width: 19px; }
.pct { font-size: 10px; }
.tho { font-size: 7px; }
.gallery { display: grid; grid-template-columns: 68px 68px 68px; gap: 3px 4px; padding: 4px 3px; background: #fff; border: 1px solid #ddd; margin-left: 2px; height: 43px; }
.gallery button { height: 15px; justify-content: flex-start; padding-left: 2px; font-size: 9px; }
.s-n { outline: 2px solid #b8b8b8; color: #111; }
.s-y { background: #ffeb9c; color: #9c6500; }
.s-r { background: #ffc7ce; color: #9c0006; }
.s-g { background: #c6efce; color: #006100; }
.gallery .s-c { background: #f2f2f2; color: #fa7d00; border: 1px solid #7f7f7f; font-weight: 700; }
.gallery .s-l { color: #fa7d00; border-bottom: 3px solid #eab36e; }
.gscroll { display: flex; flex-direction: column; }
.gscroll button { width: 9px; height: 14px; background: #fff; border: 1px solid #ddd; }
.gscroll .off { background: #e1e1e1; color: #aaa; }

.fbar { display: flex; align-items: center; height: 30px; padding: 3px 4px 0; color: #333; }
.namebox, .fx, .formula { display: flex; align-items: center; height: 17px; background: #fff; border: 1px solid #d4d4d4; }
.namebox { width: 69px; padding: 0 4px; }
.namebox input { flex: 1; }
.fbar .grip { width: 20px; text-align: center; color: #999; }
.fx { width: 74px; justify-content: space-around; color: #aaa; }
.fx svg { width: 9px; height: 9px; }
.fn { font: italic 10px/12px "Liberation Serif", serif; color: #222; }
.formula { flex: 1; margin-left: 3px; padding-right: 3px; }
.formula input { flex: 1; }

.sheet { display: flex; height: 535px; background: #fff; border-bottom: 1px solid #ababab; }
.gridwrap { flex: 1; overflow: hidden; }
.cells { width: 100%; table-layout: fixed; border-collapse: separate; border-spacing: 0; font: 7px/9px Lato, sans-serif; color: #111; }
.cells th { background: #e6e6e6; font: 8px/10px Roboto, sans-serif; color: #333; padding: 0; height: 13px; border-right: 1px solid #bbb; border-bottom: 1px solid #c8c8c8; overflow: hidden; }
.cells thead th { height: 16px; border-bottom-color: #9b9b9b; }
.cells tbody th { vertical-align: bottom; font-size: 9px; }
.cells th.cur { background: #d2d2d2; color: #217346; }
.cells td { position: relative; height: 13px; padding: 0 1px; border-right: 1px solid #d6d6d6; border-bottom: 1px solid #d6d6d6; white-space: nowrap; vertical-align: bottom; overflow: hidden; }
.cells tr:nth-child(even) > * { height: 14px; }
.cells tr.h20 > * { height: 20px; }
.cells tr.h45 > * { height: 45px; }
.cells td.lav { background: #d9e1f2; border-color: #d9e1f2; }
.cells td.y { background: #ffffcc; border-right-color: #222; }
.cells td.g { background: #ccffcc; border-right-color: #222; }
.cells td.o { background: #f8cbad; border-right-color: #222; }
.cells td.g.open { border-right-color: #ccffcc; }
.cells td.y.open { border-right-color: #ffffcc; }
.cells td.rk { border-right: 1px solid #222; }
.cells td.rkk { border-right: 2px solid #000; }
.cells td.bb { border-bottom-color: #8ea9db; }
.cells td.bk { border-bottom: 1px solid #222; }
.cells td.bkk { border-bottom: 2px solid #000; }
.cells td.nb { border-bottom-color: transparent; }
.cells td.num { text-align: right; padding-right: 4px; }
.cells td.pct { text-align: right; padding: 0; font-size: 7px; font-weight: 700; }
.cells td.neg { color: #c00000; padding-right: 1px; }
.cells td.b { font-weight: 700; }
.cells td.rt { text-align: right; }
.cells td.two { line-height: 11px; }
.cells td.hd { padding-left: 4px; }
.cells td.active { outline: 2px solid #217346; outline-offset: -1px; overflow: visible; }
.drop { position: absolute; right: 0; bottom: 0; width: 11px; height: 11px; background: #fff; border: 1px solid #bbb; color: #444; }
.drop svg.t { width: 7px; height: 7px; }
.vert { position: absolute; right: 2px; bottom: 2px; writing-mode: vertical-rl; transform: rotate(180deg); font-weight: 700; line-height: 9px; }
.vert.hi { bottom: 13px; }

.vscroll { width: 14px; background: #e6e6e6; display: flex; flex-direction: column; padding: 3px 2px 0; }
.vscroll button { width: 10px; height: 10px; background: #fff; border: 1px solid #bbb; }
.vscroll .thumb { height: 152px; background: #fff; border: 1px solid #bbb; margin-bottom: auto; }

.sheets { display: flex; align-items: center; height: 19px; font-size: 9px; line-height: 18px; color: #444; border-bottom: 1px solid #c6c6c6; }
.arrows { display: flex; width: 68px; padding-left: 18px; gap: 15px; color: #aaa; }
.sheets a + a { padding: 0 11px; }
.sheets .on { background: #fff; color: #217346; font-weight: 700; border-bottom: 2px solid #217346; padding: 0 8px; line-height: 17px; align-self: flex-start; }
.sheets .rule { border-right: 1px solid #aaa; line-height: 12px; }
.plus { margin-left: 15px; }
.sheets .grip { margin-left: auto; color: #999; }
.hscroll { width: 496px; margin: 0 14px 0 9px; display: flex; height: 10px; }
.hscroll button { width: 10px; background: #fff; }
.hscroll svg { width: 5px; height: 5px; }
.hscroll .bar { flex: 1; background: #fff; border: 1px solid #ababab; margin-right: 17px; }

.status { display: flex; align-items: center; justify-content: flex-end; height: 15px; background: #f3f3f3; padding-right: 5px; color: #444; }
.status button { width: 27px; height: 15px; }
.status .on { background: #cfcfcf; }
.status svg { width: 9px; height: 9px; }
.status .pm { width: 12px; text-align: center; font-size: 10px; }
.status input { appearance: none; width: 68px; height: 9px; background: linear-gradient(#999, #999) no-repeat center / 100% 1px; margin: 0; }
.status input::-webkit-slider-thumb { appearance: none; width: 3px; height: 8px; background: #555; }
.status .pc { width: 24px; text-align: right; font-size: 7px; }

.taskbar { display: flex; height: 27px; background: linear-gradient(90deg, #1c1c1c, #241f1c 30%, #3a2d20 58%, #1f1c1a 68%, #161616); color: #fff; }
.apps { display: grid; grid-template-columns: repeat(26, 1fr); width: 864px; }
.apps button { position: relative; }
.apps svg, .tray svg { width: 16px; height: 16px; }
.apps .cur { background: #4a4c4b; }
.apps .run::after { content: ""; position: absolute; left: 4px; right: 4px; bottom: 0; height: 1px; background: #9cc4ea; }
.tray { margin-left: auto; display: flex; align-items: center; padding-right: 12px; }
.weather { font-size: 9px; margin: 0 16px 0 5px; }
.tray .s { width: 9px; height: 9px; }
.tray .v { width: 12px; height: 10px; margin: 0 6px 0 6px; }
.clock { text-align: center; line-height: 12px; margin-right: 11px; }
```

FILE: sheet.js
```js
const names = ['A','B','C','D','E','F','G','H','I','J','K','L','M','N','O','P','Q','R','S','T','U','V','W','X','Y','Z','AA',''];
const widths = [76,76,35,34,35,34,35,34,35,35,34,27,27,27,76,77,35,34,35,34,33,37,29,77,76,77,76];
const bonds = `Btp 01.03.2072 2,15%|61,44 68,17 54,54 56,76 64,14 49,03 59,65 60,38 53,56|59,94|5,50% -6,55% 22,26%
Btp 1.03.2048 3,45%|88,57 96,25 81,46 84,54 92,78 75,82 87,90 88,97 85,63|88,14|4,13% -5,00% 16,24%
Btp 01.09.2040 5% Eur|108,74 115,51 101,65 105,91 113,33 97,27 109,26 110,52 107,96|109,00|2,92% -3,87% 12,06%
Btp 01.09.2044 4,75%|106,63 114,01 99,22 102,56 110,98 93,50 106,04 107,25 104,68|106,19|3,48% -4,27% 13,56%
Btp St52 2.15%|65,93 73,69 59,43 62,59 69,75 54,79 65,42 66,19 64,32|65,72|5,01% -5,78% 19,97%
Btp 01.05.2031 6%|115,29 119,14 111,06 113,94 118,92 108,64 116,39 117,36 115,58|115,84|1,67% -2,58% 6,63%
Btp 01.03.2035 3,35%|91,25 95,70 86,40 90,98 98,12 85,47 95,07 95,85 94,12|94,90|4,31% -3,28% 11,04%
Btp 1.3.2067 2,8%|73,12 80,52 65,52 68,84 76,95 59,49 71,75 72,73 70,52|72,21|5,66% -6,17% 21,38%
Btp 01.09.2050 2,45%|71,89 79,33 65,13 68,50 75,33 60,54 71,61 72,52 70,49|71,82|4,70% -5,90% 18,63%
Btp 01.09.2049 3,85%|94,09 102,66 86,63 89,70 98,23 80,28 93,09 94,26 91,80|93,31|4,02% -5,06% 16,22%
Btp 1.2.37 4%|97,99 103,12 92,54 96,33 103,50 89,63 100,21 101,08 99,32|100,09|3,90% -3,29% 11,63%
Btp 1.2.2033 5,75%|113,20 117,70 108,01 112,39 118,58 106,82 115,72 116,86 114,88|115,32|2,61% -2,70% 7,96%
Btp 01.08.2039 5%|108,56 114,69 101,50 105,77 113,21 97,62 109,24 110,37 108,04|109,04|3,10% -3,68% 11,70%
Btp Future Ap37|68,97 73,26 64,09 68,48 74,10 63,07 72,07 72,72 71,46|72,08|5,25% -2,72% 14,28%
Btp Green Ap35 4%|97,17 102,25 92,57 96,91 104,04 91,19 101,07 101,90 100,12|100,92|4,14% -2,99% 10,67%
Btp Ge26 3.5%|100,53 101,87 99,24 99,96 101,48 98,81 100,84 101,24 100,45|100,46|0,50% -1,00% 1,67%
Btp Ot53 4.5%|- - - 97,25 107,17 87,20 101,57 102,79 100,11|101,98|4,87% -4,84% 16,95%
Btp 01.12.2032 2.5%|86,45 91,03 81,91 87,57 93,85 83,23 91,47 92,09 90,77|91,26|4,22% -2,76% 9,65%
Btp Mz38 3,25%|88,12 93,40 82,52 87,06 94,14 80,63 90,91 91,71 90,03|90,81|4,31% -3,53% 12,63%
Btp 01.05.2033 4,40%|101,50 105,46 97,31 101,75 108,32 96,56 105,52 106,29 104,64|105,19|3,39% -2,89% 8,94%`
  .split('\n').map(line => line.split('|'));
const owners = { 8: 'Fineco', 12: 'Mediolanum', 15: 'Portafoglio', 25: 'Poste' };
const unruled = [9, 14, 18, 23];

const cells = {};
function put(ref, text, cls) {
  const c = cells[ref] || (cells[ref] = { text: '', cls: '' });
  if (text) c.text += text;
  if (cls) c.cls += ' ' + cls;
}
const range = (from, to) => names.slice(names.indexOf(from), names.indexOf(to) + 1);
const arrow = '<button class="drop" aria-label="Filtro"><svg class="c"><use href="#caret"/></svg></button>';
const filter = '<button class="drop" aria-label="Filtro attivo"><svg class="t" viewBox="0 0 7 7"><path class="f" d="M2 1h5v1H5v4H4V2H2zM0 5h2v1H0z"/></svg></button>';
const tint = { C: 'y', D: 'g open', E: 'o rkk', F: 'y', G: 'g', H: 'o', I: 'y', J: 'g', K: 'o' };

// Pivot areas
for (const [a, b, date, mark] of [['A', 'B', '(Tutto)', arrow], ['O', 'P', '20/02/2024', filter]]) {
  for (const c of [a, b]) for (const r of [2, 3, 5, 6, 7]) put(c + r, '', 'lav' + (r === 3 || r === 7 ? ' bb' : ''));
  put(a + 2, 'mese');
  put(b + 2, '(più elementi)' + filter);
  put(a + 3, '<span class="vert">data</span>');
  put(b + 3, date + mark);
  put(a + 7, '<span class="vert hi">dice BTP</span>' + filter);
  put(b + 7, '<span class="vert hi">po</span>' + arrow, 'bk');
}
for (const c of range('C', 'K')) { put(c + 5, '', 'lav'); put(c + 6, '', c >= 'F' && c <= 'H' ? 'g open bkk' : 'lav bkk'); put(c + 7, '', tint[c] + ' b hd bkk'); }
for (const c of range('Q', 'S')) { put(c + 5, '', 'lav'); put(c + 6, '', 'lav bk'); }
put('B7', '', 'rkk'); put('E6', '', 'rkk'); put('P7', '', 'rk');
put('C5', 'anno' + arrow, 'b'); put('D5', 'Valori', 'b');
put('Q5', 'anno' + arrow, 'b'); put('R5', 'Valori', 'b');
for (const [c, t] of [['C', 2022], ['F', 2023], ['I', 2024], ['Q', 2024]]) put(c + 6, t, 'b rt');
['Medio', 'Max', 'Min'].forEach((t, i) => {
  for (const set of ['CDE', 'FGH', 'IJK', 'QRS']) put(set[i] + 7, t);
  put('UVW'[i] + 7, 'Diff.%<br>' + t, ['y', 'g open', 'o'][i] + ' b two bkk');
  put('UVW'[i] + 6, '', 'bkk');
});
put('Q7', '', 'y open b hd bk'); put('R7', '', 'lav rk b hd bk'); put('S7', '', 'lav rk b hd bk'); put('T7', '', 'rk');

// Bond rows
bonds.forEach(([name, left, right, diff], i) => {
  const r = i + 8, line = unruled.includes(r) ? 'nb' : 'bk';
  const edge = owners[r + 1] || r === 27 ? 'bb' : '';
  put('A' + r, owners[r], 'b rk ' + edge); put('O' + r, owners[r], 'b rk ' + edge);
  put('B' + r, name, 'rkk ' + line); put('P' + r, name, 'rk ' + line);
  left.split(' ').forEach((v, k) => { const c = 'CDEFGHIJK'[k]; put(c + r, v === '-' ? '' : v, tint[c] + ' num ' + line); });
  put('Q' + r, right, 'y open num ' + line); put('R' + r, right, 'rk num ' + line); put('S' + r, right, 'rk num ' + line);
  put('T' + r, '', 'rk');
  diff.split(' ').forEach((v, k) => put('UVW'[k] + r, v, ['y', 'g open neg', 'o'][k] + ' pct ' + line));
});
put('A28', '', 'active');

let html = '<colgroup><col style="width:18px">' + widths.map(w => `<col style="width:${w}px">`).join('') + '<col></colgroup><thead><tr><th></th>' +
  names.map(n => `<th scope="col"${n === 'A' ? ' class="cur"' : ''}>${n}</th>`).join('') + '</tr></thead><tbody>';
for (let r = 1; r <= 36; r++) {
  html += `<tr class="${r === 3 ? 'h20' : r === 7 ? 'h45' : ''}"><th scope="row"${r === 28 ? ' class="cur"' : ''}>${r}</th>` +
    names.map(n => { const c = cells[n + r]; return c ? `<td class="${c.cls.trim()}">${c.text}</td>` : '<td></td>'; }).join('') + '</tr>';
}
document.getElementById('cells').innerHTML = html + '</tbody>';
```
